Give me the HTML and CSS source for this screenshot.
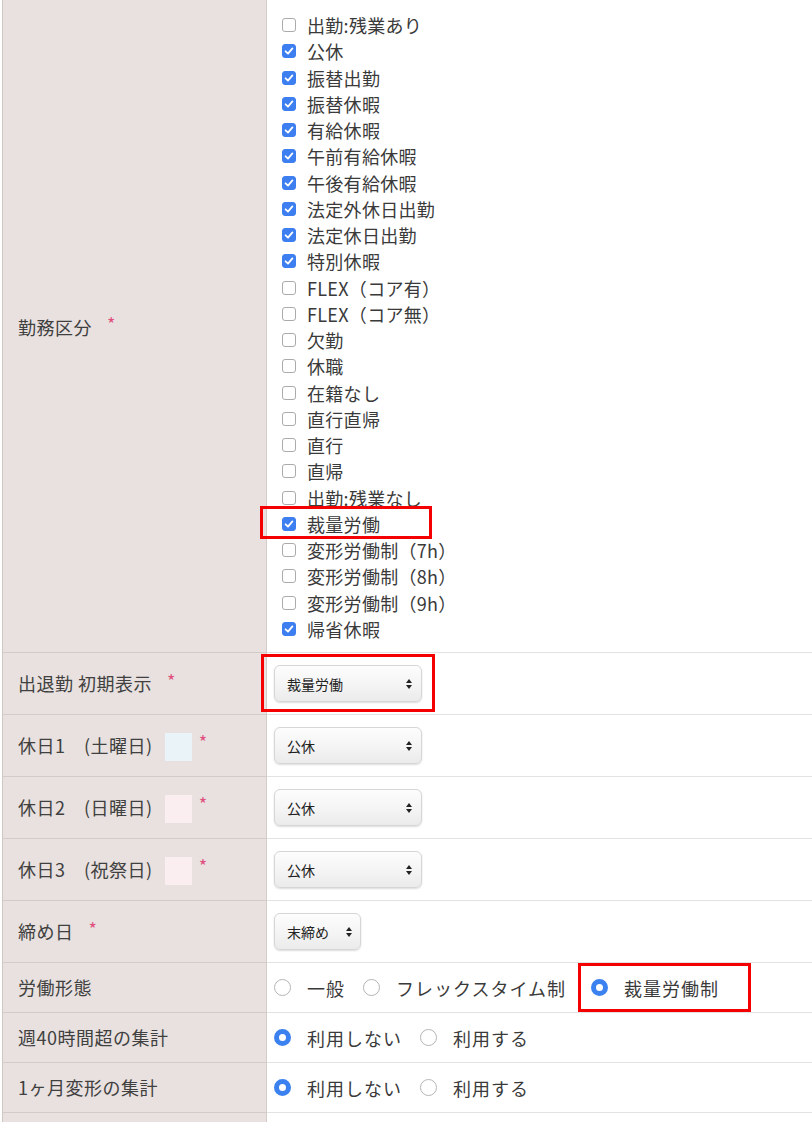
FILE: index.html
```html
<!DOCTYPE html>
<html lang="ja">
<head>
<meta charset="utf-8">
<link rel="stylesheet" href="styles.css">
</head>
<body>
<div class="wrap">
<table class="form">
  <tr class="row-list">
    <th><span class="lbl">勤務区分</span><span class="req">*</span></th>
    <td>
      <ul class="checks">
        <li><span class="cb"></span>出勤:残業あり</li>
        <li><span class="cb on"><svg viewBox="0 0 14 14"><path d="M3.6 7.3 L6 9.6 L10.4 4.4" /></svg></span>公休</li>
        <li><span class="cb on"><svg viewBox="0 0 14 14"><path d="M3.6 7.3 L6 9.6 L10.4 4.4" /></svg></span>振替出勤</li>
        <li><span class="cb on"><svg viewBox="0 0 14 14"><path d="M3.6 7.3 L6 9.6 L10.4 4.4" /></svg></span>振替休暇</li>
        <li><span class="cb on"><svg viewBox="0 0 14 14"><path d="M3.6 7.3 L6 9.6 L10.4 4.4" /></svg></span>有給休暇</li>
        <li><span class="cb on"><svg viewBox="0 0 14 14"><path d="M3.6 7.3 L6 9.6 L10.4 4.4" /></svg></span>午前有給休暇</li>
        <li><span class="cb on"><svg viewBox="0 0 14 14"><path d="M3.6 7.3 L6 9.6 L10.4 4.4" /></svg></span>午後有給休暇</li>
        <li><span class="cb on"><svg viewBox="0 0 14 14"><path d="M3.6 7.3 L6 9.6 L10.4 4.4" /></svg></span>法定外休日出勤</li>
        <li><span class="cb on"><svg viewBox="0 0 14 14"><path d="M3.6 7.3 L6 9.6 L10.4 4.4" /></svg></span>法定休日出勤</li>
        <li><span class="cb on"><svg viewBox="0 0 14 14"><path d="M3.6 7.3 L6 9.6 L10.4 4.4" /></svg></span>特別休暇</li>
        <li><span class="cb"></span>FLEX（コア有）</li>
        <li><span class="cb"></span>FLEX（コア無）</li>
        <li><span class="cb"></span>欠勤</li>
        <li><span class="cb"></span>休職</li>
        <li><span class="cb"></span>在籍なし</li>
        <li><span class="cb"></span>直行直帰</li>
        <li><span class="cb"></span>直行</li>
        <li><span class="cb"></span>直帰</li>
        <li><span class="cb"></span>出勤:残業なし</li>
        <li class="hl-item"><span class="hl hl-check"></span><span class="cb on"><svg viewBox="0 0 14 14"><path d="M3.6 7.3 L6 9.6 L10.4 4.4" /></svg></span>裁量労働</li>
        <li><span class="cb"></span>変形労働制（7h）</li>
        <li><span class="cb"></span>変形労働制（8h）</li>
        <li><span class="cb"></span>変形労働制（9h）</li>
        <li><span class="cb on"><svg viewBox="0 0 14 14"><path d="M3.6 7.3 L6 9.6 L10.4 4.4" /></svg></span>帰省休暇</li>
      </ul>
    </td>
  </tr>
  <tr class="row-sel">
    <th><span class="lbl">出退勤 初期表示</span><span class="req">*</span></th>
    <td>
      <div class="hl-wrap">
        <span class="hl hl-select"></span>
        <div class="sel"><span>裁量労働</span><svg class="arr" viewBox="0 0 8 12"><path d="M4 1 L7 5 L1 5 Z M4 11 L7 7 L1 7 Z"/></svg></div>
      </div>
    </td>
  </tr>
  <tr class="row-sel">
    <th><span class="lbl">休日1　(土曜日)</span><span class="swatch sat"></span><span class="req">*</span></th>
    <td><div class="sel"><span>公休</span><svg class="arr" viewBox="0 0 8 12"><path d="M4 1 L7 5 L1 5 Z M4 11 L7 7 L1 7 Z"/></svg></div></td>
  </tr>
  <tr class="row-sel">
    <th><span class="lbl">休日2　(日曜日)</span><span class="swatch sun"></span><span class="req">*</span></th>
    <td><div class="sel"><span>公休</span><svg class="arr" viewBox="0 0 8 12"><path d="M4 1 L7 5 L1 5 Z M4 11 L7 7 L1 7 Z"/></svg></div></td>
  </tr>
  <tr class="row-sel">
    <th><span class="lbl">休日3　(祝祭日)</span><span class="swatch sun"></span><span class="req">*</span></th>
    <td><div class="sel"><span>公休</span><svg class="arr" viewBox="0 0 8 12"><path d="M4 1 L7 5 L1 5 Z M4 11 L7 7 L1 7 Z"/></svg></div></td>
  </tr>
  <tr class="row-sel">
    <th><span class="lbl">締め日</span><span class="req">*</span></th>
    <td><div class="sel sel-small"><span>末締め</span><svg class="arr" viewBox="0 0 8 12"><path d="M4 1 L7 5 L1 5 Z M4 11 L7 7 L1 7 Z"/></svg></div></td>
  </tr>
  <tr class="row-radio">
    <th><span class="lbl">労働形態</span></th>
    <td>
      <div class="radios">
        <label class="opt"><span class="rb"></span>一般</label>
        <label class="opt"><span class="rb"></span>フレックスタイム制</label>
        <label class="opt opt-hl"><span class="hl hl-radio"></span><span class="rb on"></span>裁量労働制</label>
      </div>
    </td>
  </tr>
  <tr class="row-radio">
    <th><span class="lbl">週40時間超の集計</span></th>
    <td>
      <div class="radios">
        <label class="opt"><span class="rb on"></span>利用しない</label>
        <label class="opt"><span class="rb"></span>利用する</label>
      </div>
    </td>
  </tr>
  <tr class="row-radio">
    <th><span class="lbl">1ヶ月変形の集計</span></th>
    <td>
      <div class="radios">
        <label class="opt"><span class="rb on"></span>利用しない</label>
        <label class="opt"><span class="rb"></span>利用する</label>
      </div>
    </td>
  </tr>
  <tr class="row-radio">
    <th></th>
    <td></td>
  </tr>
</table>
</div>
</body>
</html>
```

FILE: styles.css
```css
html, body {
  margin: 0;
  padding: 0;
  background: #ffffff;
}
body {
  font-family: "Noto Sans CJK JP", "Noto Sans", sans-serif;
  color: #3a3a3a;
  overflow: hidden;
  height: 1122px;
}
.wrap {
  padding-left: 2px;
}
.form {
  border-collapse: collapse;
  width: 810px;
  table-layout: fixed;
  border-left: 1px solid #cfc7c4;
}
.form th {
  width: 248px;
  background: #e8e1df;
  border-right: 1px solid #d4cbc8;
  border-bottom: 1px solid #d3cbc8;
  text-align: left;
  font-weight: normal;
  font-size: 18px;
  letter-spacing: 0.5px;
  padding: 0 0 0 15px;
  vertical-align: middle;
  white-space: nowrap;
  color: #404040;
}
.form td {
  border-bottom: 1px solid #e2e2e2;
  padding: 0 0 0 7px;
  vertical-align: middle;
}
.row-list th,
.row-list td {
  padding-top: 12px;
  padding-bottom: 10px;
}
.row-list td {
  padding-left: 15px;
}
.row-sel th,
.row-sel td {
  height: 61px;
}
.row-radio th,
.row-radio td {
  height: 49px;
}
.lbl {
  vertical-align: middle;
  position: relative;
  top: -2px;
}
.req {
  color: #e0507e;
  font-size: 18px;
  margin-left: 15px;
  position: relative;
  top: -2px;
}
.swatch {
  display: inline-block;
  width: 27px;
  height: 28px;
  margin-left: 12px;
  vertical-align: middle;
}
.swatch + .req {
  margin-left: 7px;
}
.swatch.sat { background: #eaf3f7; }
.swatch.sun { background: #faeef0; }

.checks {
  list-style: none;
  margin: 0;
  padding: 0;
}
.checks li {
  height: 26.25px;
  line-height: 26.25px;
  font-size: 18px;
  display: flex;
  align-items: center;
  white-space: nowrap;
  color: #3a3a3a;
  letter-spacing: 0.3px;
}
.hl-item {
  position: relative;
}
.cb {
  display: inline-block;
  box-sizing: border-box;
  width: 14px;
  height: 14px;
  border: 1px solid #ababab;
  border-radius: 3px;
  background: #fff;
  margin-right: 11px;
  flex: none;
  position: relative;
}
.cb.on {
  background: #3d7ff0;
  border-color: #3d7ff0;
}
.cb svg {
  position: absolute;
  left: -1px;
  top: -1px;
  width: 14px;
  height: 14px;
}
.cb svg path {
  fill: none;
  stroke: #fff;
  stroke-width: 1.8;
  stroke-linecap: round;
  stroke-linejoin: round;
}

.hl {
  position: absolute;
  border: 3px solid #f40000;
  box-sizing: border-box;
  pointer-events: none;
}
.hl-check {
  left: -22px;
  top: -5px;
  width: 172px;
  height: 33px;
}
.hl-wrap {
  position: relative;
  display: inline-block;
}
.hl-select {
  left: -13px;
  top: -11px;
  width: 174px;
  height: 58px;
}

.sel {
  box-sizing: border-box;
  width: 148px;
  height: 37px;
  border: 1px solid #d6d6d6;
  border-radius: 6px;
  background: linear-gradient(#fdfdfd, #f3f3f3 60%, #ebebeb);
  box-shadow: 0 1px 2px rgba(0,0,0,0.14);
  display: flex;
  align-items: center;
  justify-content: space-between;
  padding: 0 8px 0 12px;
  font-size: 14px;
  color: #222;
}
.sel-small {
  width: 87px;
  padding-right: 7px;
}
.arr {
  width: 8px;
  height: 12px;
  fill: #222;
}

.radios {
  display: flex;
  align-items: center;
  font-size: 18px;
  letter-spacing: 1px;
  color: #3a3a3a;
}
.opt {
  display: flex;
  align-items: center;
  white-space: nowrap;
  margin-right: 18px;
  position: relative;
}
.rb {
  display: inline-block;
  box-sizing: border-box;
  width: 17px;
  height: 17px;
  border-radius: 50%;
  border: 1px solid #b5b5b5;
  background: #fff;
  margin-right: 16px;
  flex: none;
}
.rb.on {
  border: 5.5px solid #3b82f0;
  background: #fff;
}
.opt-hl {
  margin-left: 7px;
}
.hl-radio {
  left: -13px;
  top: -12px;
  width: 173px;
  height: 49px;
}
```
